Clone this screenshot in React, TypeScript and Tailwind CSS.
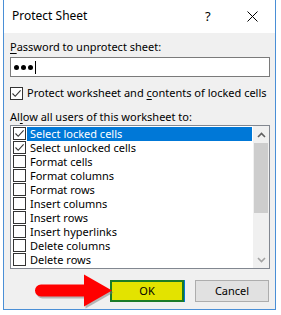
const font = { fontFamily: '"Noto Sans", "Liberation Sans", sans-serif' };

const items = [
  { label: 'Select locked cells', checked: true, selected: true },
  { label: 'Select unlocked cells', checked: true },
  { label: 'Format cells' },
  { label: 'Format columns' },
  { label: 'Format rows' },
  { label: 'Insert columns' },
  { label: 'Insert rows' },
  { label: 'Insert hyperlinks' },
  { label: 'Delete columns' },
  { label: 'Delete rows' },
];

function CheckBox({ checked }: { checked?: boolean }) {
  return (
    <span className="flex h-[13px] w-[13px] shrink-0 items-center justify-center border border-[#333333] bg-white">
      {checked && (
        <svg width="11" height="11" viewBox="0 0 11 11">
          <path d="M1.5 5.5 L4.2 8.3 L9.6 2.4" fill="none" stroke="#333333" strokeWidth="1.1" />
        </svg>
      )}
    </span>
  );
}

function Chevron({ up, color }: { up?: boolean; color: string }) {
  return (
    <svg width="9" height="6" viewBox="0 0 9 6">
      <path d={up ? 'M1 5 L4.5 1.5 L8 5' : 'M1 1 L4.5 4.5 L8 1'} fill="none" stroke={color} strokeWidth="1.6" />
    </svg>
  );
}

export default function App() {
  return (
    <div className="relative h-[315px] w-[281px] overflow-hidden bg-white text-[11px] leading-[16px] text-black" style={font}>
      <div className="ml-[3px] flex h-[310px] w-[273px] flex-col border-x border-b border-[#4a8fd6] bg-[#f0f0f0]">
        {/* title bar */}
        <div className="flex h-[33px] shrink-0 items-center bg-white pl-[8px]">
          <span className="w-[193px] text-[12px] -translate-y-[1px]">Protect Sheet</span>
          <span className="text-[13px] -translate-y-[1px]">?</span>
          <svg className="ml-[36px]" width="11" height="11" viewBox="0 0 11 11">
            <path d="M0.5 0.5 L10.5 10.5 M10.5 0.5 L0.5 10.5" stroke="#000" strokeWidth="1" />
          </svg>
        </div>

        <div className="ml-[6px] flex w-[260px] flex-col pt-[6px]">
          <div>
            <span className="underline underline-offset-2">P</span>assword to unprotect sheet:
          </div>
          <div className="mt-[2px] flex h-[20px] items-center border border-[#7a7a7a] bg-white pl-[3px]">
            <span className="h-[5px] w-[5px] rounded-full bg-black" />
            <span className="ml-[2px] h-[5px] w-[5px] rounded-full bg-black" />
            <span className="ml-[2px] h-[5px] w-[5px] rounded-full bg-black" />
            <span className="ml-[2px] h-[13px] w-[1px] bg-black" />
          </div>

          <div className="mt-[8px] flex items-center">
            <CheckBox checked />
            <span className="ml-[4px] whitespace-nowrap">
              Protect worksheet and <span className="underline underline-offset-2">c</span>ontents of locked cells
            </span>
          </div>

          <div className="mt-[8px]">
            Al<span className="underline underline-offset-2">l</span>ow all users of this worksheet to:
          </div>

          <div className="flex h-[144px] border border-[#828790] bg-white">
            <div className="flex flex-1 flex-col pl-[2px] pt-[1px]">
              {items.map((it) => (
                <div key={it.label} className="flex h-[14px] items-start">
                  <CheckBox checked={it.checked} />
                  <span
                    className={`ml-[1px] h-[14px] flex-1 pl-[3px] leading-[14px] whitespace-nowrap ${
                      it.selected ? 'bg-[#0078d7] text-white' : ''
                    }`}
                  >
                    {it.label}
                  </span>
                </div>
              ))}
            </div>
            <div className="ml-[1px] flex w-[16px] flex-col bg-[#f0f0f0]">
              <div className="flex h-[17px] items-center justify-center">
                <Chevron up color="#606060" />
              </div>
              <div className="mx-auto h-[70px] w-[14px] bg-[#cdcdcd]" />
              <div className="flex-1" />
              <div className="flex h-[17px] items-center justify-center">
                <Chevron color="#a3a3a3" />
              </div>
            </div>
          </div>

          <div className="mt-[11px] flex justify-end gap-[11px] pr-[1px]">
            <button className="h-[22px] w-[74px] border-2 border-[#1b7b28] bg-[#e3e300] shadow-[1px_0_0_#0078d7]">OK</button>
            <button className="h-[22px] w-[74px] border border-[#adadad] bg-[#e1e1e1]">Cancel</button>
          </div>
        </div>
      </div>

      {/* red arrow pointing at OK */}
      <svg className="absolute left-[32px] top-[271px]" width="84" height="40" viewBox="0 0 84 40">
        <path d="M9 13.5 L52 13.5 L52 3.5 L80 19.5 L52 35.5 L52 25.5 L9 25.5 A6 6 0 0 1 9 13.5 Z" fill="#7a7a7a" opacity="0.5" transform="translate(1.5 2)" />
        <path d="M9 13.5 L52 13.5 L52 3.5 L80 19.5 L52 35.5 L52 25.5 L9 25.5 A6 6 0 0 1 9 13.5 Z" fill="#ff0000" />
      </svg>
    </div>
  );
}
